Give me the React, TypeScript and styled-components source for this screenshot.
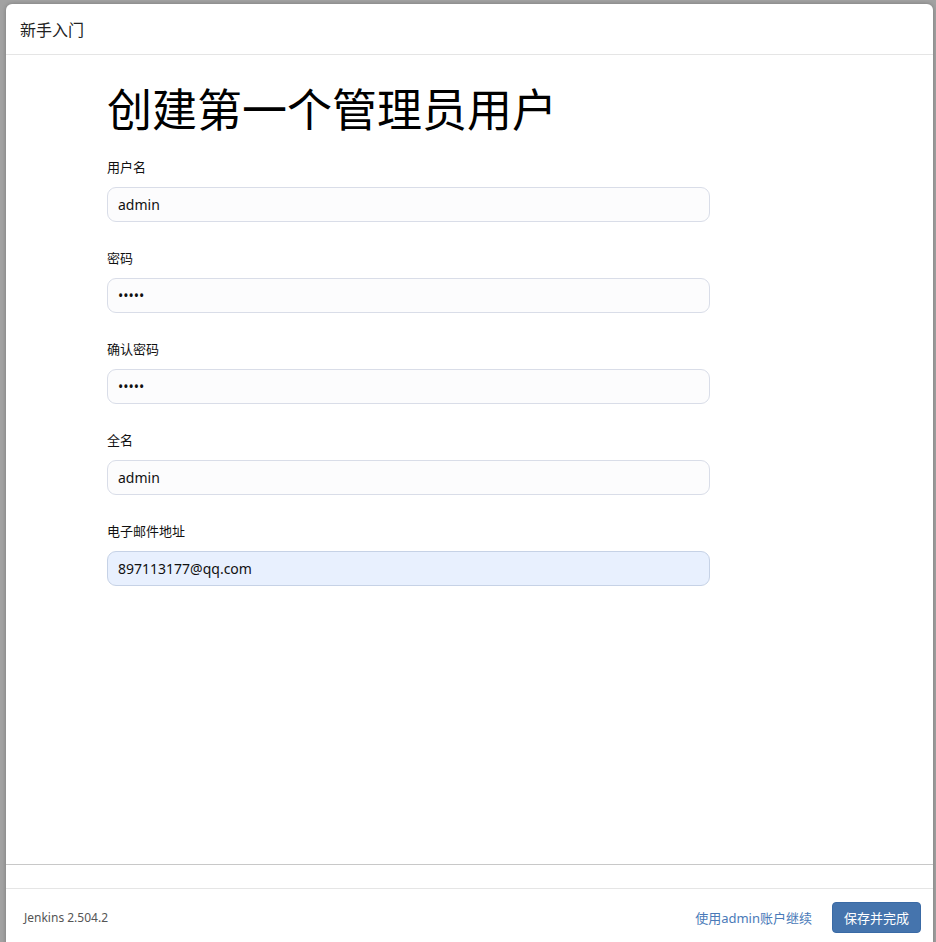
import React from 'react';
import styled, { createGlobalStyle } from 'styled-components';

const GlobalStyle = createGlobalStyle`
    html, body {
        margin: 0;
        padding: 0;
        height: 100%;
        overflow: hidden;
    }
    body {
        font-family: "Noto Sans", "Noto Sans CJK SC", sans-serif;
        color: #333;
    }
`;

const Backdrop = styled.div`
    height: 942px;
    background: #a2a2a2;
    padding: 4px 3px 0 6px;
    box-sizing: border-box;
    overflow: hidden;
`;

const Dialog = styled.div`
    display: flex;
    flex-direction: column;
    width: 927px;
    height: 960px;
    background: #fff;
    border-radius: 6px 6px 0 0;
    box-shadow: 0 0 4px rgba(0, 0, 0, 0.25);
`;

const Header = styled.div`
    display: flex;
    align-items: center;
    height: 50px;
    padding: 0 14px;
    border-bottom: 1px solid #e5e5e5;
    font-size: 16px;
    color: #222;
    flex-shrink: 0;
`;

const Body = styled.div`
    height: 810px;
    padding: 23px 101px 0;
    border-bottom: 1px solid #c8c8c8;
    box-sizing: border-box;
    flex-shrink: 0;
`;

const Title = styled.h1`
    margin: 0 0 15px;
    font-size: 45px;
    font-weight: 400;
    line-height: 64px;
    color: #000;
`;

const Field = styled.div`
    display: flex;
    flex-direction: column;
    width: 603px;
    margin-bottom: 26px;
`;

const Label = styled.label`
    font-size: 13px;
    line-height: 20px;
    color: #111;
    margin-bottom: 10px;
`;

const Input = styled.input<{ $filled?: boolean }>`
    height: 35px;
    box-sizing: border-box;
    padding: 0 10px;
    border-radius: 9px;
    border: 1px solid ${p => (p.$filled ? '#c6d2e6' : '#d9dde8')};
    background: ${p => (p.$filled ? '#e8f0fe' : '#fcfcfd')};
    font-family: "Noto Sans", "Noto Sans CJK SC", sans-serif;
    font-size: 14px;
    color: #111;
    outline: none;
`;

const Gap = styled.div`
    height: 23px;
    flex-shrink: 0;
`;

const Footer = styled.div`
    display: flex;
    align-items: center;
    justify-content: space-between;
    height: 56px;
    padding: 2px 12px 0 18px;
    border-top: 1px solid #e5e5e5;
    box-sizing: border-box;
`;

const Version = styled.span`
    font-size: 12px;
    color: #555;
`;

const Actions = styled.div`
    display: flex;
    align-items: center;
    gap: 20px;
`;

const Link = styled.a`
    font-size: 13px;
    color: #4a7ab8;
    text-decoration: none;
    cursor: pointer;
`;

const PrimaryButton = styled.button`
    height: 31px;
    padding: 0 11px;
    border: 1px solid #3a6aa5;
    border-radius: 4px;
    background: #4574ad;
    color: #fff;
    font-family: "Noto Sans", "Noto Sans CJK SC", sans-serif;
    font-size: 13px;
    cursor: pointer;
`;

const fields = [
    { label: '用户名', type: 'text', value: 'admin' },
    { label: '密码', type: 'password', value: 'admin' },
    { label: '确认密码', type: 'password', value: 'admin' },
    { label: '全名', type: 'text', value: 'admin' },
    { label: '电子邮件地址', type: 'text', value: '897113177@qq.com', filled: true },
];

export default function App() {
    return (
        <Backdrop>
            <GlobalStyle />
            <Dialog>
                <Header>新手入门</Header>
                <Body>
                    <Title>创建第一个管理员用户</Title>
                    {fields.map((f, i) => (
                        <Field key={i}>
                            <Label>{f.label}</Label>
                            <Input type={f.type} value={f.value} readOnly $filled={f.filled} />
                        </Field>
                    ))}
                </Body>
                <Gap />
                <Footer>
                    <Version>Jenkins 2.504.2</Version>
                    <Actions>
                        <Link>使用admin账户继续</Link>
                        <PrimaryButton>保存并完成</PrimaryButton>
                    </Actions>
                </Footer>
            </Dialog>
        </Backdrop>
    );
}
